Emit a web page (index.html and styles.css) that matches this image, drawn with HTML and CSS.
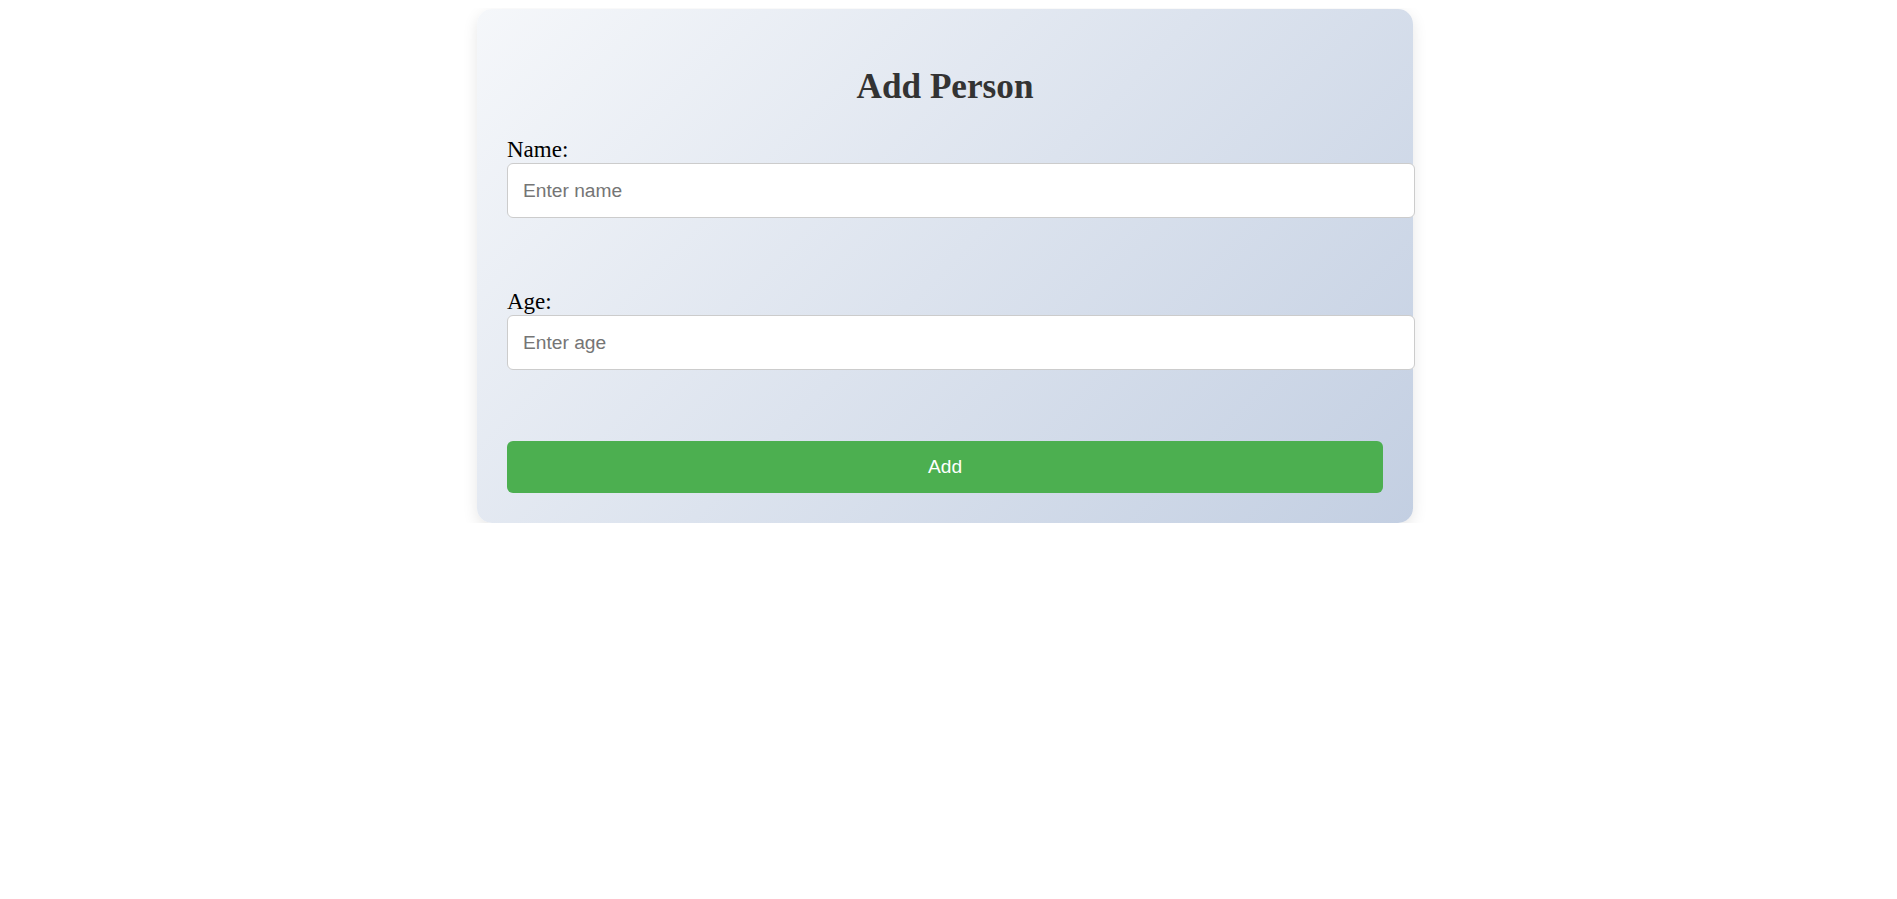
FILE: index.html
```html
<!DOCTYPE html>
<html lang="en">
<head>
<meta charset="utf-8">
<title>Add Person</title>
<link rel="stylesheet" href="styles.css">
</head>
<body>
<div class="page">
  <form class="card">
    <h1 class="title">Add Person</h1>
    <div class="field">
      <label class="label" for="name">Name:</label>
      <input class="input" id="name" type="text" placeholder="Enter name">
    </div>
    <div class="field">
      <label class="label" for="age">Age:</label>
      <input class="input" id="age" type="number" placeholder="Enter age">
    </div>
    <button class="btn" type="button">Add</button>
  </form>
</div>
</body>
</html>
```

FILE: styles.css
```css
html, body {
  background: #ffffff;
}
body {
  margin: 8px;
  font-family: "Liberation Serif", "Times New Roman", serif;
}
.page {
  padding-right: 7px;
}
.card {
  width: 876px;
  margin: 1px auto 0;
  padding: 30px;
  border-radius: 15px;
  background: linear-gradient(135deg, #f5f7fa 0%, #c3cfe2 100%);
  box-shadow: 0 5px 15px rgba(0, 0, 0, 0.1);
}
.title {
  margin: 28px 0 30px;
  text-align: center;
  font-size: 35.2px;
  font-weight: bold;
  color: #333333;
  line-height: normal;
}
.field {
  margin-bottom: 71px;
}
.label {
  display: block;
  font-size: 23px;
  color: #000000;
  line-height: normal;
}
.input {
  display: block;
  box-sizing: content-box;
  width: 100%;
  margin: 0;
  padding: 15.5px 15px;
  border: 1px solid #cccccc;
  border-radius: 6px;
  background: #ffffff;
  font-family: "Liberation Sans", Arial, sans-serif;
  font-size: 19.2px;
  line-height: 22px;
  color: #333333;
  outline: none;
  -moz-appearance: textfield;
}
.input::-webkit-outer-spin-button,
.input::-webkit-inner-spin-button {
  -webkit-appearance: none;
  margin: 0;
}
.input::placeholder {
  color: #757575;
}
.btn {
  display: block;
  width: 100%;
  margin: 0;
  padding: 15px 0;
  border: none;
  border-radius: 6px;
  background: #4caf50;
  color: #ffffff;
  font-family: "Liberation Sans", Arial, sans-serif;
  font-size: 19.2px;
  line-height: 22px;
  cursor: pointer;
}
```
